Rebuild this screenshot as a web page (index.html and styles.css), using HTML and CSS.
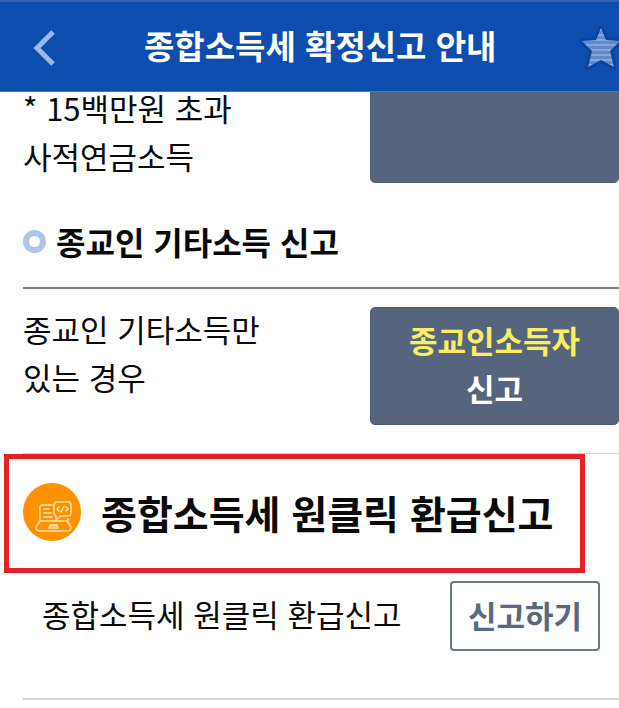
FILE: index.html
```html
<!DOCTYPE html>
<html lang="ko">
    <head>
        <meta charset="utf-8">
        <meta name="viewport" content="width=device-width, initial-scale=1">
        <title>종합소득세 확정신고 안내</title>
        <link rel="stylesheet" href="styles.css">
    </head>
    <body>
        <header class="topbar">
            <button type="button" class="icon-btn back" aria-label="이전">
                <svg width="22" height="36" viewBox="0 0 22 36">
                    <path d="M20 2 L4 18 L20 34" fill="none" stroke="#9db8e8" stroke-width="5"/>
                </svg>
            </button>
            <h1>종합소득세 확정신고 안내</h1>
            <button type="button" class="icon-btn star" aria-label="즐겨찾기">
                <svg width="42" height="46" viewBox="0 0 42 46">
                    <defs>
                        <pattern id="stripes" width="42" height="5" patternUnits="userSpaceOnUse">
                            <rect width="42" height="5" fill="#6289cb"/>
                            <rect width="42" height="2" fill="#86a6dd"/>
                        </pattern>
                    </defs>
                    <path d="M22 4 L27 16 L41 17 L31 27 L35 43 L22 36 L9 43 L13 27 L3 17 L17 16 Z" fill="url(#stripes)" stroke="#0a429c" stroke-width="5" stroke-linejoin="round" paint-order="stroke"/>
                </svg>
            </button>
        </header>
        <main>
            <section class="row pension">
                <p>* 15백만원 초과<br>사적연금소득</p>
                <button type="button" class="btn-dark" aria-label="사적연금소득 신고"></button>
            </section>

            <h2 class="section-title"><span class="ring"></span>종교인 기타소득 신고</h2>
            <section class="row religion">
                <p>종교인 기타소득만<br>있는 경우</p>
                <button type="button" class="btn-dark"><span class="point">종교인소득자</span><br>신고</button>
            </section>

            <section class="refund">
                <h2 class="refund-title">
                    <svg class="refund-icon" width="58" height="58" viewBox="0 0 58 58">
                        <circle cx="29" cy="29" r="29" fill="#ff9100"/>
                        <g fill="none" stroke="#ffe3ae" stroke-width="1.500" stroke-linecap="round" stroke-linejoin="round">
                            <path d="M29 22 H19 Q17 22 17 24 V38"/>
                            <path d="M45 36 V38"/>
                            <path d="M21 26 H26 M21 30 H28 M21 34 H29"/>
                            <path d="M34 19 H45 Q48 19 48 22 V30 Q48 33 45 33 H38 L33 37 V33 Q31 32 31 30 V22 Q31 19 34 19 Z"/>
                            <path d="M36 24 L34 26 L36 28 M43 24 L45 26 L43 28 M41 23 L38 29"/>
                            <path d="M17 38 H44 L48 44 V45 Q48 48 45 48 H16 Q13 48 13 45 V44 Z"/>
                            <path d="M27 42 H34 L35 45 H26 Z" fill="#ffc46b"/>
                        </g>
                    </svg>
                    종합소득세 원클릭 환급신고
                </h2>
                <div class="refund-row">
                    <p>종합소득세 원클릭 환급신고</p>
                    <button type="button" class="btn-line">신고하기</button>
                </div>
            </section>
        </main>
    </body>
</html>
```
FILE: styles.css
```css
* {
    box-sizing: border-box;
}
body {
    margin: 0;
    background-color: #fefefe;
    color: #0a0a0a;
    font-family: "Noto Sans CJK KR", sans-serif;
    font-size: 31px;
    line-height: 48px;
    overflow-x: hidden;
}
h1, h2, p {
    margin: 0;
}
button {
    font-family: inherit;
    cursor: pointer;
}
.topbar {
    position: sticky;
    top: 0;
    z-index: 1;
    display: grid;
    grid-template-columns: 80px 1fr 40px;
    align-items: center;
    height: 92px;
    background-color: #0d4dae;
    border-top: 2px solid #3562a8;
    border-bottom: 1px solid #4a74b4;
}
.topbar h1 {
    padding: 0 0 4px 64px;
    color: #fff;
    font-size: 33px;
    line-height: 48px;
    white-space: nowrap;
}
.icon-btn {
    display: flex;
    padding: 0;
    border: none;
    background: none;
}
.back {
    padding: 2px 0 0 33px;
}
.star svg {
    flex: none;
}
main {
    margin-top: -8px;
    padding-left: 23px;
}
.row {
    display: grid;
    grid-template-columns: 1fr 249px;
    align-items: start;
}
.btn-dark {
    padding: 0 0 4px;
    border: 1px solid #4f5e77;
    border-radius: 5px;
    background-color: #56647d;
    color: #fff;
    font-size: 31px;
    font-weight: bold;
    line-height: 48px;
}
.point {
    color: #fbee62;
}
.pension .btn-dark {
    height: 99px;
}
.section-title {
    display: flex;
    align-items: center;
    gap: 10px;
    margin-top: 28px;
    padding: 6px 0 22px;
    border-bottom: 2px solid #7f7f7f;
    font-size: 32px;
    line-height: 48px;
}
.ring {
    width: 23px;
    height: 23px;
    border: 6px solid #afc5e8;
    border-radius: 50%;
}
.religion {
    padding: 16px 0 28px;
    border-bottom: 1px solid #c9d0d6;
}
.religion .btn-dark {
    height: 118px;
    margin-top: 2px;
}
.refund {
    border-bottom: 2px solid #d3d8df;
    padding-bottom: 47px;
}
.refund-title {
    display: flex;
    align-items: center;
    gap: 20px;
    height: 119px;
    margin: 0 34px 0 -19px;
    padding: 0 0 4px 14px;
    border: 5px solid #e71f27;
    font-size: 39px;
    white-space: nowrap;
}
.refund-icon {
    flex: none;
}
.refund-row {
    display: flex;
    align-items: center;
    justify-content: space-between;
    margin-top: 8px;
    padding: 0 19px;
}
.refund-row p {
    padding-bottom: 4px;
}
.btn-line {
    width: 150px;
    height: 70px;
    padding: 0 0 4px;
    border: 2px solid #6c7789;
    border-radius: 4px;
    background-color: #fff;
    color: #5b6980;
    font-size: 31px;
    font-weight: bold;
}
```
